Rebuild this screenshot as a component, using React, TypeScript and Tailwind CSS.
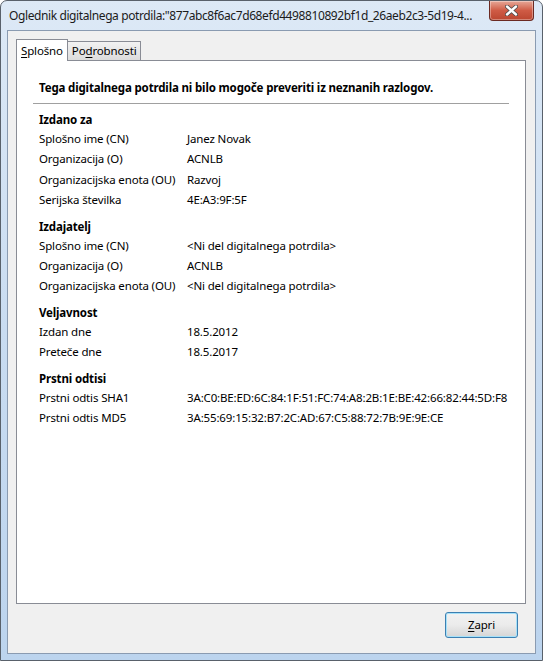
import type { ReactElement } from "react";

interface Row {
  label: string;
  value: string;
}

interface Section {
  title: string;
  rows: Row[];
}

const sections: Section[] = [
  {
    title: "Izdano za",
    rows: [
      { label: "Splošno ime (CN)", value: "Janez Novak" },
      { label: "Organizacija (O)", value: "ACNLB" },
      { label: "Organizacijska enota (OU)", value: "Razvoj" },
      { label: "Serijska številka", value: "4E:A3:9F:5F" },
    ],
  },
  {
    title: "Izdajatelj",
    rows: [
      { label: "Splošno ime (CN)", value: "<Ni del digitalnega potrdila>" },
      { label: "Organizacija (O)", value: "ACNLB" },
      { label: "Organizacijska enota (OU)", value: "<Ni del digitalnega potrdila>" },
    ],
  },
  {
    title: "Veljavnost",
    rows: [
      { label: "Izdan dne", value: "18.5.2012" },
      { label: "Preteče dne", value: "18.5.2017" },
    ],
  },
  {
    title: "Prstni odtisi",
    rows: [
      {
        label: "Prstni odtis SHA1",
        value: "3A:C0:BE:ED:6C:84:1F:51:FC:74:A8:2B:1E:BE:42:66:82:44:5D:F8",
      },
      {
        label: "Prstni odtis MD5",
        value: "3A:55:69:15:32:B7:2C:AD:67:C5:88:72:7B:9E:9E:CE",
      },
    ],
  },
];

function CloseButton(): ReactElement {
  return (
    <div className="flex h-[20px] w-[45px] shrink-0 items-center justify-center rounded-b-[4px] border border-t-0 border-[#6b2a22] bg-gradient-to-b from-[#e6a797] via-[#cf5b45] to-[#bb4630] shadow-[inset_0_0_0_1px_rgba(255,255,255,0.35)]">
      <svg width="13" height="11" viewBox="0 0 13 11">
        <path
          d="M2 1.5 L11 9.5 M11 1.5 L2 9.5"
          stroke="#4a4a4a"
          strokeWidth="4"
          strokeLinecap="round"
        />
        <path
          d="M2 1.5 L11 9.5 M11 1.5 L2 9.5"
          stroke="#ffffff"
          strokeWidth="2.4"
          strokeLinecap="round"
        />
      </svg>
    </div>
  );
}

export default function App(): ReactElement {
  return (
    <div
      className="flex h-[661px] w-[543px] flex-col rounded-t-[7px] border border-[#59616b] bg-gradient-to-b from-[#dde9f6] via-[#c9dcf1] to-[#bcd4ee] text-[11.5px] tracking-[-0.15px] text-black"
      style={{ fontFamily: '"Noto Sans", "Open Sans", sans-serif' }}
    >
      {/* title bar */}
      <div className="flex h-[29px] shrink-0 items-start justify-between gap-2 pl-[8px] pr-[8px]">
        <span className="mt-[7px] min-w-0 overflow-hidden whitespace-nowrap text-[12px] leading-[16px] tracking-[-0.4px] text-[#1b1b1b]">
          Oglednik digitalnega potrdila:"877abc8f6ac7d68efd4498810892bf1d_26aeb2c3-5d19-4...
        </span>
        <CloseButton />
      </div>

      {/* client area */}
      <div className="mx-[6px] mb-[6px] flex flex-1 flex-col border border-[#8a9bb1] bg-[#f0f0f0] pl-[8px] pr-[9px] pt-[8px]">
        {/* tabs */}
        <div className="relative z-10 flex items-end">
          <div className="-mb-px flex h-[22px] items-center border border-b-0 border-[#898c95] bg-white px-[4px]">
            <span>
              <span className="underline underline-offset-2">S</span>plošno
            </span>
          </div>
          <div className="flex h-[19px] items-center border border-b-0 border-l-0 border-[#898c95] bg-gradient-to-b from-[#f2f2f2] to-[#dcdcdc] px-[4px]">
            <span>
              Po<span className="underline underline-offset-2">d</span>robnosti
            </span>
          </div>
        </div>

        {/* tab panel */}
        <div className="h-[544px] border border-[#898c95] bg-white">
          <div className="px-[22px] pt-[18px] pb-[6px] font-bold leading-[18px]">
            Tega digitalnega potrdila ni bilo mogoče preveriti iz neznanih razlogov.
          </div>
          <div className="mx-[16px] h-px bg-[#a0a0a0]" />
          <div className="flex flex-col gap-[7px] px-[22px] pt-[7px]">
            {sections.map((s) => (
              <div key={s.title}>
                <div className="font-bold leading-[18px]">{s.title}</div>
                {s.rows.map((r) => (
                  <div key={r.label} className="flex leading-[20.4px]">
                    <span className="w-[148px] shrink-0">{r.label}</span>
                    <span>{r.value}</span>
                  </div>
                ))}
              </div>
            ))}
          </div>
        </div>

        {/* buttons */}
        <div className="flex justify-end pr-[8px] pt-[8px]">
          <button
            type="button"
            className="h-[26px] w-[73px] rounded-[3px] border border-[#3c7fb1] bg-gradient-to-b from-[#f2f2f2] via-[#ebebeb] to-[#d5d5d5] shadow-[inset_0_0_0_1px_#a6e1f9]"
          >
            <span className="underline underline-offset-2">Z</span>apri
          </button>
        </div>
      </div>
    </div>
  );
}
